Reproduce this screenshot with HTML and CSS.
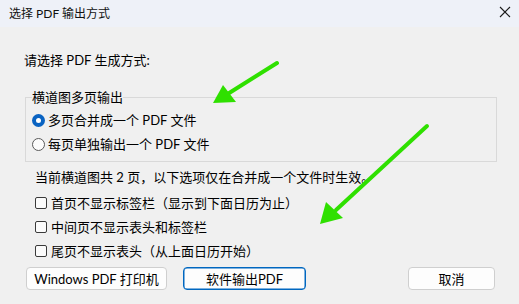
FILE: index.html
```html
<!DOCTYPE html>
<html lang="zh-CN">
<head>
<meta charset="utf-8">
<link rel="stylesheet" href="styles.css">
</head>
<body>
<div class="window">
  <div class="titlebar">
    <span class="title">选择 PDF 输出方式</span>
    <svg class="close" width="12" height="12" viewBox="0 0 12 12"><path d="M1 1 L11 11 M11 1 L1 11" stroke="#1b1b1b" stroke-width="1.1" fill="none"/></svg>
  </div>
  <div class="content">
    <div class="prompt">请选择 PDF 生成方式:</div>
    <fieldset class="group">
      <legend>横道图多页输出</legend>
      <label class="row"><span class="radio checked"></span><span>多页合并成一个 PDF 文件</span></label>
      <label class="row"><span class="radio"></span><span>每页单独输出一个 PDF 文件</span></label>
    </fieldset>
    <div class="options">
      <div class="info">当前横道图共 2 页，以下选项仅在合并成一个文件时生效。</div>
      <label class="row crow"><span class="check"></span><span>首页不显示标签栏（显示到下面日历为止）</span></label>
      <label class="row crow"><span class="check"></span><span>中间页不显示表头和标签栏</span></label>
      <label class="row crow"><span class="check"></span><span>尾页不显示表头（从上面日历开始）</span></label>
    </div>
    <div class="buttons">
      <button class="btn b1">Windows PDF 打印机</button>
      <button class="btn b2 default">软件输出PDF</button>
      <button class="btn b3">取消</button>
    </div>
  </div>
  <svg class="arrows" width="519" height="304" viewBox="0 0 519 304">
    <line x1="277" y1="63" x2="226" y2="95" stroke="#2fe000" stroke-width="4" stroke-linecap="round"/>
    <polygon points="213,103 223,85 236,102" fill="#2fe000"/>
    <line x1="427" y1="126" x2="336" y2="210" stroke="#2fe000" stroke-width="4" stroke-linecap="round"/>
    <polygon points="320,224 326,202 343,218" fill="#2fe000"/>
  </svg>
</div>
</body>
</html>
```
FILE: styles.css
```css
html, body {
  margin: 0;
  padding: 0;
  background: #f0f0f0;
}
body {
  width: 519px;
  height: 304px;
  overflow: hidden;
  font-family: "Lato", "Noto Sans CJK SC", "Noto Sans", sans-serif;
  font-size: 13px;
  color: #000;
}
.window {
  position: relative;
  width: 519px;
  height: 304px;
  display: flex;
  flex-direction: column;
}
.titlebar {
  height: 27px;
  flex: none;
  background: #eef1f8;
  display: flex;
  align-items: center;
  justify-content: space-between;
  padding: 0 8px 0 9px;
  box-sizing: border-box;
}
.title {
  font-size: 12px;
  line-height: 16px;
  color: #111;
}
.close {
  margin-top: -3px;
}
.content {
  padding: 0 22px 0 24px;
  display: flex;
  flex-direction: column;
}
.prompt {
  margin-top: 25px;
  line-height: 16px;
}
.group {
  margin: 21px 0 0 1px;
  padding: 3px 6px 5px 6px;
  border: 1px solid #d9d9d9;
  min-width: 0;
}
.group legend {
  padding: 0;
  margin-left: 0;
  line-height: 16px;
  font-size: 13px;
}
.row {
  display: flex;
  align-items: center;
  height: 24px;
  line-height: 16px;
}
.radio {
  width: 13px;
  height: 13px;
  box-sizing: border-box;
  border: 1px solid #5a5a5a;
  border-radius: 50%;
  margin-right: 3px;
  background: #fcfcfc;
  flex: none;
}
.radio.checked {
  border: none;
  background: #0a63c2;
  display: flex;
  align-items: center;
  justify-content: center;
}
.radio.checked::after {
  content: "";
  width: 5px;
  height: 5px;
  border-radius: 50%;
  background: #fff;
}
.options {
  padding-left: 11px;
  display: flex;
  flex-direction: column;
}
.info {
  margin-top: 7px;
  margin-bottom: 6px;
  line-height: 16px;
}
.check {
  width: 12px;
  height: 12px;
  box-sizing: border-box;
  border: 1px solid #3a3a3a;
  border-radius: 2px;
  background: #fbfbfb;
  margin-right: 4px;
  flex: none;
}
.buttons {
  margin-top: 4px;
  margin-left: 2px;
  margin-right: 2px;
  display: flex;
  gap: 16px;
}
.btn {
  height: 23px;
  box-sizing: border-box;
  font-family: "Lato", "Noto Sans CJK SC", "Noto Sans", sans-serif;
  font-size: 13px;
  line-height: 16px;
  color: #000;
  background: #fdfdfd;
  border: 1px solid #cfcfcf;
  border-radius: 4px;
  padding: 0;
}
.b1 { width: 141px; }
.b2 { width: 123px; }
.b3 { width: 87px; margin-left: auto; }
.btn.default {
  border: 1px solid #0067c0;
  box-shadow: inset 0 0 0 0.5px #0067c0;
}
.arrows {
  position: absolute;
  left: 0;
  top: 0;
  pointer-events: none;
}
```
